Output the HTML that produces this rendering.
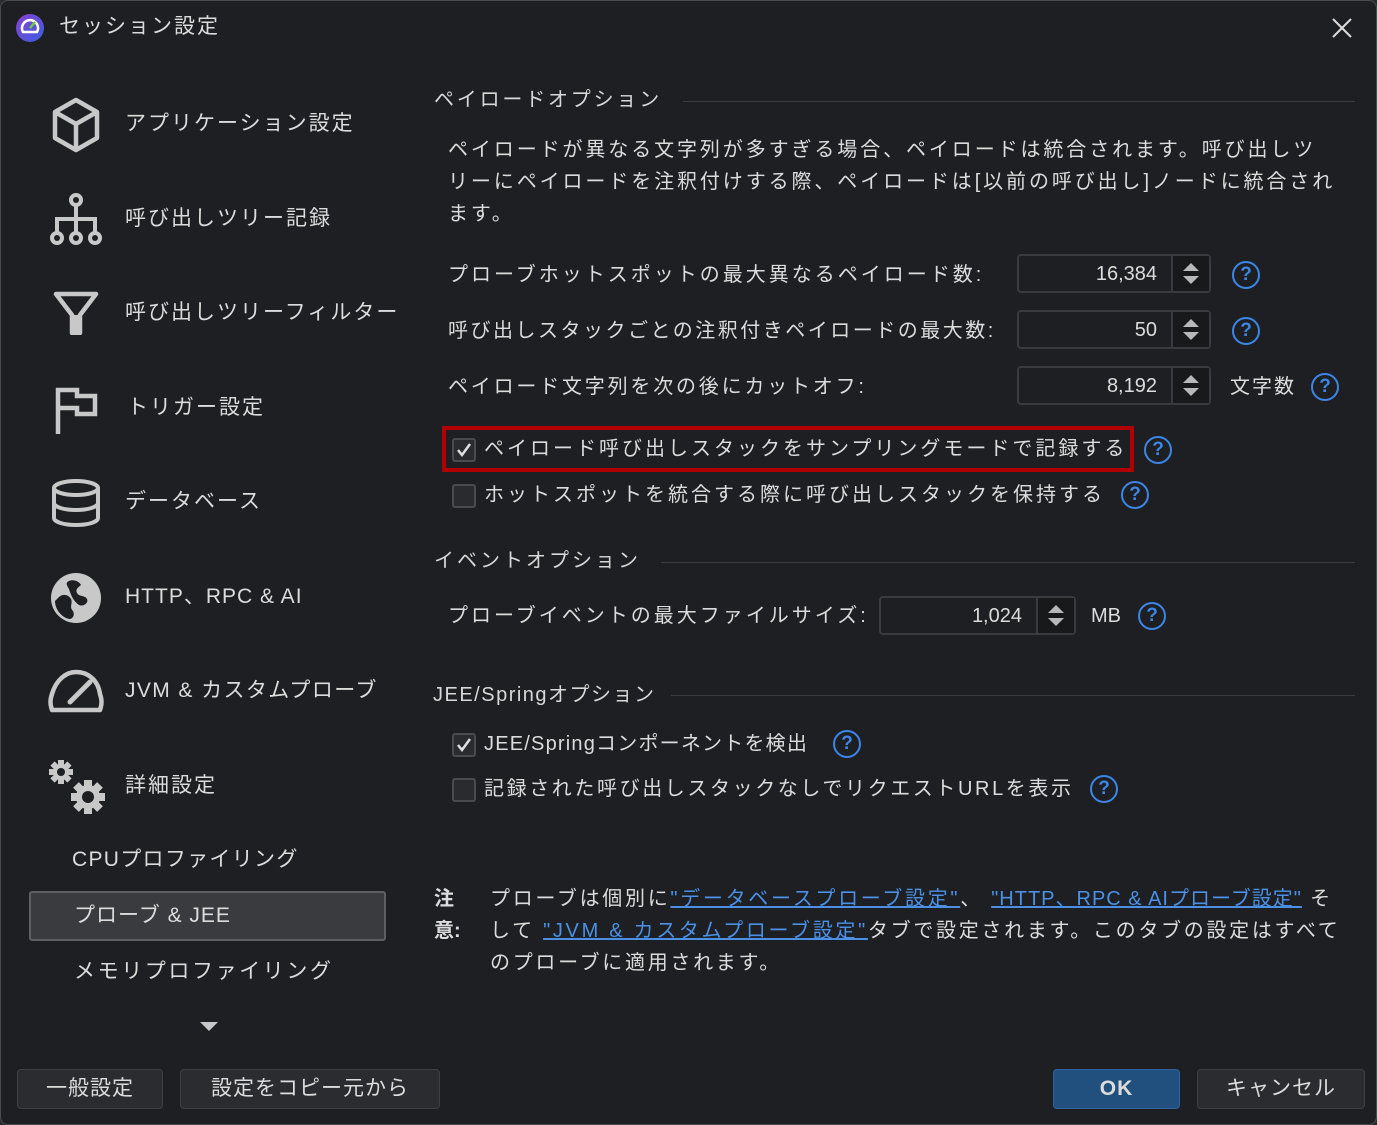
<!DOCTYPE html>
<html><head><meta charset="utf-8">
<style>
html,body{margin:0;padding:0;background:#2b2b2b;}
body{width:1377px;height:1125px;position:relative;overflow:hidden;font-family:"Liberation Sans","Noto Sans CJK JP",sans-serif;color:#dcdcdc;}
.win{position:absolute;left:0;top:0;width:1375px;height:1123px;background:#1e1f22;border:1px solid #4a4b4e;border-radius:8px;}
.a{position:absolute;white-space:nowrap;font-size:20px;line-height:28px;}
.nav{font-size:21px;letter-spacing:2px;}
.sec{color:#d8d8d8;}
.line{position:absolute;height:1px;background:#3a3b3e;}
.sp{position:absolute;width:194px;height:39px;border:2px solid #3a3b3f;border-radius:4px;background:#1e1f22;box-sizing:border-box;}
.sp .v{position:absolute;right:52px;top:4px;font-size:20px;line-height:28px;}
.sp .arr{position:absolute;right:0;top:0;width:36px;height:35px;background:#18191b;border-left:2px solid #3a3b3f;}
.help{position:absolute;width:24px;height:24px;border:2.5px solid #3b86e6;border-radius:50%;color:#3b86e6;font-size:19px;line-height:24px;text-align:center;font-weight:bold;}
.cb{position:absolute;width:20px;height:20px;border:2px solid #4a4b4f;border-radius:3px;background:#2a2b2e;}
.btn{position:absolute;height:40px;border:1.5px solid #3e3f43;border-radius:4px;background:#2b2c2f;box-sizing:border-box;text-align:center;font-size:21px;line-height:38px;letter-spacing:1px;}
a{color:#4a90e6;text-decoration:underline;}
</style></head><body>
<div class="win">
<svg style="position:absolute;left:15px;top:13px" width="28" height="28" viewBox="0 0 28 28"><defs><linearGradient id="g" x1="0" y1="0" x2="1" y2="1"><stop offset="0" stop-color="#8a3fd0"/><stop offset="1" stop-color="#3a5fe0"/></linearGradient></defs><circle cx="14" cy="14" r="14" fill="url(#g)"/><path d="M7 18 A8 8 0 1 1 21 18 Z" fill="none" stroke="#fff" stroke-width="2.5"/><path d="M14 14 L19 8" stroke="#6cd03a" stroke-width="2.5"/></svg>
<div class="a" style="left:58px;top:12px;font-size:21px;letter-spacing:2px">セッション設定</div>
<svg style="position:absolute;left:1330px;top:16px" width="22" height="22"><path d="M2 2L20 20M20 2L2 20" stroke="#ddd" stroke-width="2"/></svg>

<svg style="position:absolute;left:50px;top:96px" width="50" height="56" viewBox="0 0 50 56" fill="none" stroke="#c8c8c8" stroke-width="4.5" stroke-linejoin="round"><path d="M25 3L46 15V41L25 53L4 41V15Z"/><path d="M4 15L25 27L46 15M25 27V53"/></svg>
<svg style="position:absolute;left:47px;top:191px" width="56" height="54" viewBox="0 0 56 54" fill="none" stroke="#c8c8c8" stroke-width="4"><circle cx="28" cy="8" r="5"/><path d="M28 13V27M9 42V27H47V42M28 27V42"/><circle cx="9" cy="46" r="5"/><circle cx="28" cy="46" r="5"/><circle cx="47" cy="46" r="5"/></svg>
<svg style="position:absolute;left:52px;top:290px" width="46" height="44" viewBox="0 0 46 44"><path d="M3 3H43L27 24V42H19V24Z" fill="none" stroke="#c8c8c8" stroke-width="4.5" stroke-linejoin="round"/><rect x="19" y="24" width="8" height="18" fill="#c8c8c8"/></svg>
<svg style="position:absolute;left:54px;top:385px" width="44" height="48" viewBox="0 0 44 48" fill="none" stroke="#c8c8c8" stroke-width="4.5"><path d="M3 48V4H22V10H40V28H22V22H3"/></svg>
<svg style="position:absolute;left:50px;top:477px" width="50" height="50" viewBox="0 0 50 50" fill="none" stroke="#c8c8c8" stroke-width="4"><ellipse cx="25" cy="10" rx="22" ry="7"/><path d="M3 10V40C3 44 13 47 25 47S47 44 47 40V10M3 25C3 29 13 32 25 32S47 29 47 25"/></svg>
<svg style="position:absolute;left:48px;top:570px" width="54" height="54" viewBox="0 0 54 54"><circle cx="27" cy="27" r="25" fill="#c8c8c8"/><path d="M10 26C14 22 20 24 22 28C24 32 20 36 24 40C26 44 24 48 20 48C12 46 6 38 6 30Z" fill="#1e1f22"/><path d="M20 10C24 8 30 10 32 14C30 16 26 18 28 22C30 26 36 24 38 28C40 32 34 36 30 34C24 30 22 24 20 18C18 14 16 12 20 10Z" fill="#1e1f22"/></svg>
<svg style="position:absolute;left:47px;top:663px" width="56" height="50" viewBox="0 0 56 50" fill="none" stroke="#c8c8c8" stroke-width="4.5"><path d="M4 46C2 40 2 36 4 30C8 16 18 8 28 8C40 8 50 16 52 30C54 36 54 40 52 46Z" stroke-linejoin="round"/><path d="M22 38L42 18" stroke-width="5" stroke-linecap="round"/></svg>
<svg style="position:absolute;left:46px;top:756px" width="60" height="60" viewBox="0 0 60 60" fill="#c8c8c8"><g transform="translate(14,15)"><circle r="8"/><rect x="-3" y="-12" width="6" height="24"/><rect x="-12" y="-3" width="24" height="6"/><rect x="-3" y="-12" width="6" height="24" transform="rotate(45)"/><rect x="-3" y="-12" width="6" height="24" transform="rotate(-45)"/><circle r="4" fill="#1e1f22"/></g><g transform="translate(41,40)"><circle r="12"/><rect x="-4" y="-17" width="8" height="34"/><rect x="-17" y="-4" width="34" height="8"/><rect x="-4" y="-17" width="8" height="34" transform="rotate(45)"/><rect x="-4" y="-17" width="8" height="34" transform="rotate(-45)"/><circle r="6" fill="#1e1f22"/></g></svg>

<div class="a nav" style="left:124px;top:109px">アプリケーション設定</div>
<div class="a nav" style="left:124px;top:204px">呼び出しツリー記録</div>
<div class="a nav" style="left:124px;top:298px">呼び出しツリーフィルター</div>
<div class="a nav" style="left:126px;top:393px">トリガー設定</div>
<div class="a nav" style="left:124px;top:487px">データベース</div>
<div class="a nav" style="left:124px;top:582px;letter-spacing:1px">HTTP、RPC &amp; AI</div>
<div class="a nav" style="left:124px;top:676px;letter-spacing:1.4px">JVM &amp; カスタムプローブ</div>
<div class="a nav" style="left:124px;top:771px">詳細設定</div>
<div class="a nav" style="left:71px;top:845px;letter-spacing:1.3px">CPUプロファイリング</div>
<div style="position:absolute;left:28px;top:890px;width:357px;height:50px;box-sizing:border-box;border:2.5px solid #5e5f63;border-radius:3px;background:#3a3b3e"></div>
<div class="a nav" style="left:73px;top:901px;letter-spacing:1px">プローブ &amp; JEE</div>
<div class="a nav" style="left:73px;top:957px;letter-spacing:2.6px">メモリプロファイリング</div>
<svg style="position:absolute;left:199px;top:1021px" width="18" height="10"><path d="M0 0H18L9 9Z" fill="#c8c8c8"/></svg>

<div class="btn" style="left:16px;top:1068px;width:146px">一般設定</div>
<div class="btn" style="left:179px;top:1068px;width:260px">設定をコピー元から</div>
<div class="btn" style="left:1052px;top:1068px;width:127px;background:#22507e;border-color:#2e62a0;font-weight:bold;">OK</div>
<div class="btn" style="left:1196px;top:1068px;width:168px">キャンセル</div>

<div class="a sec" style="left:433px;top:85px;letter-spacing:2.8px">ペイロードオプション</div>
<div class="line" style="left:682px;top:100px;width:672px"></div>
<div class="a" style="left:447px;top:133px;line-height:32px;letter-spacing:2.9px">ペイロードが異なる文字列が多すぎる場合、ペイロードは統合されます。呼び出しツ<br>リーにペイロードを注釈付けする際、ペイロードは[以前の呼び出し]ノードに統合され<br>ます。</div>

<div class="a" style="left:447px;top:260px;letter-spacing:3px">プローブホットスポットの最大異なるペイロード数:</div>
<div class="sp" style="left:1016px;top:253px"><div class="v">16,384</div><div class="arr"><svg width="36" height="35"><path d="M10 15L18 7L26 15ZM10 20L18 28L26 20Z" fill="#b8b8b8"/></svg></div></div>
<div class="help" style="left:1231px;top:260px">?</div>

<div class="a" style="left:447px;top:316px;letter-spacing:2.5px">呼び出しスタックごとの注釈付きペイロードの最大数:</div>
<div class="sp" style="left:1016px;top:309px"><div class="v">50</div><div class="arr"><svg width="36" height="35"><path d="M10 15L18 7L26 15ZM10 20L18 28L26 20Z" fill="#b8b8b8"/></svg></div></div>
<div class="help" style="left:1231px;top:316px">?</div>

<div class="a" style="left:447px;top:372px;letter-spacing:2.8px">ペイロード文字列を次の後にカットオフ:</div>
<div class="sp" style="left:1016px;top:365px"><div class="v">8,192</div><div class="arr"><svg width="36" height="35"><path d="M10 15L18 7L26 15ZM10 20L18 28L26 20Z" fill="#b8b8b8"/></svg></div></div>
<div class="a" style="left:1229px;top:372px;letter-spacing:2px">文字数</div>
<div class="help" style="left:1310px;top:372px">?</div>

<div style="position:absolute;left:441px;top:425px;width:692px;height:46px;box-sizing:border-box;border:4px solid #b00000"></div>
<div class="cb" style="left:451px;top:437px"></div>
<svg style="position:absolute;left:453px;top:439px" width="20" height="20"><path d="M4 10L8 15L16 4" fill="none" stroke="#e0e0e0" stroke-width="2.5"/></svg>
<div class="a" style="left:483px;top:434px;letter-spacing:3px">ペイロード呼び出しスタックをサンプリングモードで記録する</div>
<div class="help" style="left:1143px;top:435px">?</div>

<div class="cb" style="left:451px;top:483px"></div>
<div class="a" style="left:483px;top:480px;letter-spacing:3px">ホットスポットを統合する際に呼び出しスタックを保持する</div>
<div class="help" style="left:1120px;top:480px">?</div>

<div class="a sec" style="left:433px;top:546px;letter-spacing:3px">イベントオプション</div>
<div class="line" style="left:660px;top:561px;width:694px"></div>
<div class="a" style="left:447px;top:601px;letter-spacing:3px">プローブイベントの最大ファイルサイズ:</div>
<div class="sp" style="left:878px;top:595px;width:197px"><div class="v">1,024</div><div class="arr"><svg width="36" height="35"><path d="M10 15L18 7L26 15ZM10 20L18 28L26 20Z" fill="#b8b8b8"/></svg></div></div>
<div class="a" style="left:1090px;top:601px">MB</div>
<div class="help" style="left:1137px;top:601px">?</div>

<div class="a sec" style="left:432px;top:680px;letter-spacing:1.5px">JEE/Springオプション</div>
<div class="line" style="left:670px;top:694px;width:684px"></div>
<div class="cb" style="left:451px;top:732px"></div>
<svg style="position:absolute;left:453px;top:734px" width="20" height="20"><path d="M4 10L8 15L16 4" fill="none" stroke="#e0e0e0" stroke-width="2.5"/></svg>
<div class="a" style="left:483px;top:729px;letter-spacing:1.2px">JEE/Springコンポーネントを検出</div>
<div class="help" style="left:832px;top:729px">?</div>
<div class="cb" style="left:451px;top:777px"></div>
<div class="a" style="left:483px;top:774px;letter-spacing:2.6px">記録された呼び出しスタックなしでリクエストURLを表示</div>
<div class="help" style="left:1089px;top:774px">?</div>

<div class="a" style="left:433px;top:882px;font-weight:bold;line-height:32px">注<br>意:</div>
<div class="a" style="left:489px;top:882px;line-height:32px;letter-spacing:2.7px">プローブは個別に<a>"データベースプローブ設定"</a>、 <a style="letter-spacing:1px">"HTTP、RPC &amp; AIプローブ設定"</a> そ<br>して <a>"JVM &amp; カスタムプローブ設定"</a>タブで設定されます。このタブの設定はすべて<br>のプローブに適用されます。</div>
</div>
</body></html>
